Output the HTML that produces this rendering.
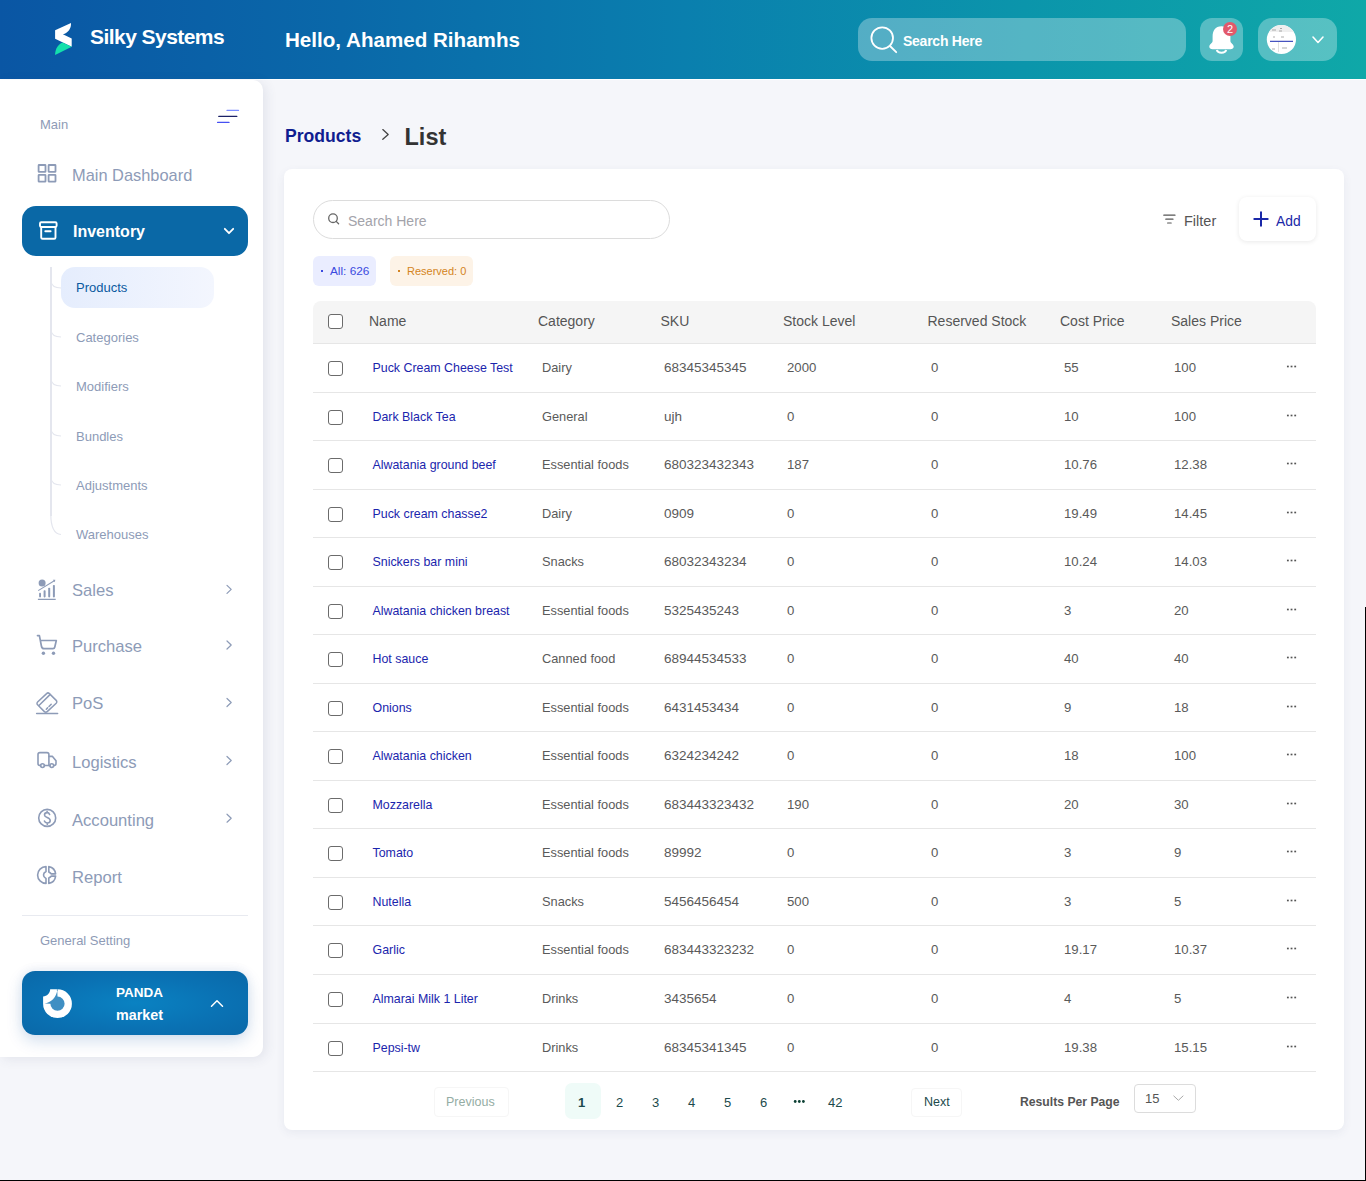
<!DOCTYPE html>
<html><head><meta charset="utf-8">
<style>
*{box-sizing:border-box;margin:0;padding:0}
html,body{width:1366px;height:1181px;overflow:hidden}
body{background:#f5f6fa;font-family:"Liberation Sans",sans-serif;position:relative;color:#555}
.abs{position:absolute}
.t{position:absolute;white-space:nowrap}
#hdr{position:absolute;left:0;top:0;width:1366px;height:79px;background:linear-gradient(90deg,#0a56a4 0%,#0a68a9 25%,#0a7fae 50%,#0b95ab 75%,#0fa8a8 100%)}
#hdrline{position:absolute;left:0;top:79px;width:1366px;height:1px;background:#fff}
.logo-t{left:90px;top:25px;font-size:21px;font-weight:bold;color:#fff;letter-spacing:-0.55px;line-height:24px}
.hello{left:285px;top:28px;font-size:20.6px;font-weight:bold;color:#fff;line-height:24px}
.hbox{position:absolute;top:18px;height:43px;background:rgba(255,255,255,0.3)}
#side{position:absolute;left:0;top:80px;width:263px;height:977px;background:#fff;border-radius:0 10px 10px 0;box-shadow:3px 2px 12px rgba(60,70,110,0.10)}
.sl{color:#8e9bb6}
.nav{left:72px;font-size:16.6px;color:#8d9bb7;line-height:18px}
.sub{left:76px;font-size:13px;color:#8d9bb7;line-height:15px}
#card{position:absolute;left:284px;top:169px;width:1060px;height:961px;background:#fff;border-radius:8px;box-shadow:0 3px 10px rgba(60,70,110,0.07)}
.th{position:absolute;left:313px;top:301px;width:1003px;height:42px;background:#f5f5f5;border-radius:8px 8px 0 0}
.hd{top:313px;font-size:14px;line-height:16px;color:#555}
.row{position:absolute;left:313px;width:1003px;border-top:1px solid #e6e6e6}
.row span{position:absolute;top:16px;font-size:13px;line-height:15px;white-space:nowrap;color:#5a5a5a}
.row .c1{left:59.5px;top:17px;color:#1b25ad;font-size:12.4px}
.row .c2{left:229px;font-size:12.8px}
.row .c3{left:351px;font-size:13.5px}
.row .c4{left:474px;font-size:13.2px}
.row .c5{left:618px;font-size:13.2px}
.row .c6{left:751px;font-size:13.2px}
.row .c7{left:861px;font-size:13.2px}
.cb{position:absolute;left:15px;top:17px;width:14.5px;height:14.5px;border:1.3px solid #6b6b6b;border-radius:3px;background:#fff}
.dots{position:absolute;left:973px;top:21px;width:11px;height:3px;background:radial-gradient(circle,#555 0.9px,transparent 1.2px) 0 0/3.7px 3px repeat-x}
.pg{top:1095px;font-size:13px;line-height:15px;color:#1c4a4c}
</style></head>
<body>
<div id="hdr"></div>
<div id="hdrline"></div>
<div class="t logo-t">Silky Systems</div>
<div class="t hello">Hello, Ahamed Rihamhs</div>
<div class="hbox" style="left:858px;width:328px;border-radius:14px"></div>
<div class="t" style="left:903px;top:33px;font-size:14px;letter-spacing:-0.25px;font-weight:bold;color:#fff;line-height:16px">Search Here</div>
<div class="hbox" style="left:1200px;width:43px;border-radius:12px"></div>
<div class="hbox" style="left:1258px;width:79px;border-radius:14px"></div>

<div id="side"></div>
<div class="t sl" style="left:40px;top:117px;font-size:13px;line-height:15px">Main</div>
<div class="t nav" style="top:166px;font-size:16.4px">Main Dashboard</div>
<div class="abs" style="left:22px;top:206px;width:226px;height:50px;border-radius:14px;background:#0a68a6"></div>
<div class="t nav" style="left:73px;top:223px;color:#fff;font-weight:bold;font-size:16px">Inventory</div>
<div class="abs" style="left:61px;top:267px;width:153px;height:41px;border-radius:14px;background:linear-gradient(90deg,#e5edfd,#f3f6fe)"></div>
<div class="abs" style="left:50px;top:267px;width:1.5px;height:249px;background:#e4e6ee"></div>
<div class="t sub" style="top:280px;color:#0b5aa0">Products</div>
<div class="t sub" style="top:330px">Categories</div>
<div class="t sub" style="top:379px">Modifiers</div>
<div class="t sub" style="top:429px">Bundles</div>
<div class="t sub" style="top:478px">Adjustments</div>
<div class="t sub" style="top:527px">Warehouses</div>
<div class="t nav" style="top:582px">Sales</div>
<div class="t nav" style="top:638px">Purchase</div>
<div class="t nav" style="top:695px">PoS</div>
<div class="t nav" style="top:754px">Logistics</div>
<div class="t nav" style="top:812px">Accounting</div>
<div class="t nav" style="top:869px">Report</div>
<div class="abs" style="left:22px;top:915px;width:226px;height:1.2px;background:#e8eaf0"></div>
<div class="t sl" style="left:40px;top:933px;font-size:13px;line-height:15px">General Setting</div>
<div class="abs" style="left:22px;top:971px;width:226px;height:64px;border-radius:13px;background:radial-gradient(ellipse at 50% 50%,#0a82c2 0%,#0a72b4 55%,#0a68a8 100%);box-shadow:0 6px 16px rgba(10,80,160,0.18),0 -2px 8px rgba(80,100,160,0.08)"></div>
<div class="t" style="left:116px;top:985px;font-size:13.5px;font-weight:bold;color:#fff;line-height:15px">PANDA</div>
<div class="t" style="left:116px;top:1008px;font-size:14.3px;font-weight:bold;color:#fff;line-height:15px">market</div>

<div id="card"></div>
<div class="t" style="left:285px;top:127px;font-size:17.6px;font-weight:bold;color:#101d90;line-height:18px">Products</div>
<div class="t" style="left:404.5px;top:124px;font-size:23.5px;font-weight:bold;color:#333;line-height:26px">List</div>
<div class="abs" style="left:313px;top:200px;width:357px;height:39px;border:1px solid #dcdcdc;border-radius:20px;background:#fff"></div>
<div class="t" style="left:348px;top:213px;font-size:14px;color:#a3a3aa;line-height:16px">Search Here</div>
<div class="abs" style="left:313px;top:256px;width:63px;height:30px;border-radius:6px;background:#eaedff"></div>
<div class="abs" style="left:320.5px;top:270px;width:2px;height:2px;background:#3b4ae0"></div>
<div class="t" style="left:330px;top:265px;font-size:11.8px;color:#3b4ae0;line-height:13px">All: 626</div>
<div class="abs" style="left:390px;top:256px;width:83px;height:30px;border-radius:6px;background:#fdf3e7"></div>
<div class="abs" style="left:397.5px;top:270px;width:2px;height:2px;background:#d48422"></div>
<div class="t" style="left:407px;top:265px;font-size:11px;color:#d48422;line-height:13px">Reserved: 0</div>
<div class="t" style="left:1184px;top:213px;font-size:14.5px;color:#555;line-height:16px">Filter</div>
<div class="abs" style="left:1239px;top:197px;width:77px;height:44px;border-radius:8px;background:#fff;box-shadow:0 1px 5px rgba(0,0,0,0.09)"></div>
<div class="t" style="left:1276px;top:214px;font-size:13.8px;color:#1a28a8;line-height:16px">Add</div>

<div class="th"></div>
<i class="cb" style="left:328px;top:314px"></i>
<div class="t hd" style="left:369px">Name</div>
<div class="t hd" style="left:538px">Category</div>
<div class="t hd" style="left:660.5px">SKU</div>
<div class="t hd" style="left:783px">Stock Level</div>
<div class="t hd" style="left:927.5px">Reserved Stock</div>
<div class="t hd" style="left:1060px">Cost Price</div>
<div class="t hd" style="left:1171px">Sales Price</div>
<div class="row" style="top:343px;height:49px"><i class="cb"></i><span class="c1">Puck Cream Cheese Test</span><span class="c2">Dairy</span><span class="c3">68345345345</span><span class="c4">2000</span><span class="c5">0</span><span class="c6">55</span><span class="c7">100</span><b class="dots"></b></div>
<div class="row" style="top:392px;height:48px"><i class="cb"></i><span class="c1">Dark Black Tea</span><span class="c2">General</span><span class="c3">ujh</span><span class="c4">0</span><span class="c5">0</span><span class="c6">10</span><span class="c7">100</span><b class="dots"></b></div>
<div class="row" style="top:440px;height:49px"><i class="cb"></i><span class="c1">Alwatania ground beef</span><span class="c2">Essential foods</span><span class="c3">680323432343</span><span class="c4">187</span><span class="c5">0</span><span class="c6">10.76</span><span class="c7">12.38</span><b class="dots"></b></div>
<div class="row" style="top:489px;height:48px"><i class="cb"></i><span class="c1">Puck cream chasse2</span><span class="c2">Dairy</span><span class="c3">0909</span><span class="c4">0</span><span class="c5">0</span><span class="c6">19.49</span><span class="c7">14.45</span><b class="dots"></b></div>
<div class="row" style="top:537px;height:49px"><i class="cb"></i><span class="c1">Snickers bar mini</span><span class="c2">Snacks</span><span class="c3">68032343234</span><span class="c4">0</span><span class="c5">0</span><span class="c6">10.24</span><span class="c7">14.03</span><b class="dots"></b></div>
<div class="row" style="top:586px;height:48px"><i class="cb"></i><span class="c1">Alwatania chicken breast</span><span class="c2">Essential foods</span><span class="c3">5325435243</span><span class="c4">0</span><span class="c5">0</span><span class="c6">3</span><span class="c7">20</span><b class="dots"></b></div>
<div class="row" style="top:634px;height:49px"><i class="cb"></i><span class="c1">Hot sauce</span><span class="c2">Canned food</span><span class="c3">68944534533</span><span class="c4">0</span><span class="c5">0</span><span class="c6">40</span><span class="c7">40</span><b class="dots"></b></div>
<div class="row" style="top:683px;height:48px"><i class="cb"></i><span class="c1">Onions</span><span class="c2">Essential foods</span><span class="c3">6431453434</span><span class="c4">0</span><span class="c5">0</span><span class="c6">9</span><span class="c7">18</span><b class="dots"></b></div>
<div class="row" style="top:731px;height:49px"><i class="cb"></i><span class="c1">Alwatania chicken</span><span class="c2">Essential foods</span><span class="c3">6324234242</span><span class="c4">0</span><span class="c5">0</span><span class="c6">18</span><span class="c7">100</span><b class="dots"></b></div>
<div class="row" style="top:780px;height:48px"><i class="cb"></i><span class="c1">Mozzarella</span><span class="c2">Essential foods</span><span class="c3">683443323432</span><span class="c4">190</span><span class="c5">0</span><span class="c6">20</span><span class="c7">30</span><b class="dots"></b></div>
<div class="row" style="top:828px;height:49px"><i class="cb"></i><span class="c1">Tomato</span><span class="c2">Essential foods</span><span class="c3">89992</span><span class="c4">0</span><span class="c5">0</span><span class="c6">3</span><span class="c7">9</span><b class="dots"></b></div>
<div class="row" style="top:877px;height:48px"><i class="cb"></i><span class="c1">Nutella</span><span class="c2">Snacks</span><span class="c3">5456456454</span><span class="c4">500</span><span class="c5">0</span><span class="c6">3</span><span class="c7">5</span><b class="dots"></b></div>
<div class="row" style="top:925px;height:49px"><i class="cb"></i><span class="c1">Garlic</span><span class="c2">Essential foods</span><span class="c3">683443323232</span><span class="c4">0</span><span class="c5">0</span><span class="c6">19.17</span><span class="c7">10.37</span><b class="dots"></b></div>
<div class="row" style="top:974px;height:49px"><i class="cb"></i><span class="c1">Almarai Milk 1 Liter</span><span class="c2">Drinks</span><span class="c3">3435654</span><span class="c4">0</span><span class="c5">0</span><span class="c6">4</span><span class="c7">5</span><b class="dots"></b></div>
<div class="row" style="top:1023px;height:48px"><i class="cb"></i><span class="c1">Pepsi-tw</span><span class="c2">Drinks</span><span class="c3">68345341345</span><span class="c4">0</span><span class="c5">0</span><span class="c6">19.38</span><span class="c7">15.15</span><b class="dots"></b></div>
<div class="abs" style="left:313px;top:1071px;width:1003px;height:1px;background:#e6e6e6"></div>
<div class="abs" style="left:434px;top:1087px;width:75px;height:30px;border:1px solid #f6f6f6;border-radius:4px;background:#fff"></div>
<div class="t pg" style="left:446px;color:#94aca3;font-size:12.5px">Previous</div>
<div class="abs" style="left:565px;top:1083px;width:36px;height:36px;border-radius:7px;background:#effbf8"></div>
<div class="t pg" style="left:578px;font-weight:bold">1</div>
<div class="t pg" style="left:616px">2</div>
<div class="t pg" style="left:652px">3</div>
<div class="t pg" style="left:688px">4</div>
<div class="t pg" style="left:724px">5</div>
<div class="t pg" style="left:760px">6</div>

<div class="t pg" style="left:828px">42</div>
<div class="abs" style="left:911px;top:1088px;width:51px;height:29px;border:1px solid #f6f6f6;border-radius:4px;background:#fff"></div>
<div class="t pg" style="left:924px;font-size:12.5px">Next</div>
<div class="t pg" style="left:1020px;font-weight:bold;font-size:12.2px;color:#555">Results Per Page</div>
<div class="abs" style="left:1134px;top:1084px;width:62px;height:29px;border:1px solid #dcdcdc;border-radius:4px;background:#fff"></div>
<div class="t" style="left:1145px;top:1091px;font-size:13px;line-height:15px;color:#555">15</div>
<svg class="abs" style="left:0;top:0" width="1366" height="1181" viewBox="0 0 1366 1181">
<!-- logo -->
<path d="M55.1,30.2 L71,22.9 C71.3,28.5 68.2,32.6 62.9,34.3 L71.7,38.5 L71.7,46.8 L55.1,38.8 Z" fill="#fff"/>
<path d="M62.5,42.6 L71.7,46.8 L55.1,54.9 C55.1,49 58,44.5 62.5,42.6 Z" fill="#14e0ac"/>
<!-- header search icon -->
<circle cx="882.2" cy="38.1" r="10.8" fill="none" stroke="#fff" stroke-width="1.8"/>
<path d="M890,46 L896.2,52.2" stroke="#fff" stroke-width="1.8" stroke-linecap="round"/>
<!-- bell -->
<path d="M1221.5,26.2 C1215.2,26.2 1212.6,31 1212.6,36.5 L1212.6,41 C1212.6,43.2 1209.3,44.2 1209.3,46.6 C1209.3,48.4 1210.6,49.2 1212.6,49.2 L1230.4,49.2 C1232.4,49.2 1233.7,48.4 1233.7,46.6 C1233.7,44.2 1230.4,43.2 1230.4,41 L1230.4,36.5 C1230.4,31 1227.8,26.2 1221.5,26.2 Z" fill="#fff"/>
<path d="M1216.8,50 C1217.8,53.6 1225.2,53.6 1226.2,50" fill="none" stroke="#fff" stroke-width="2"/>
<circle cx="1230" cy="29" r="7" fill="#e2596b"/>
<text x="1230" y="33.2" font-family="Liberation Sans" font-size="11" fill="#fff" text-anchor="middle">2</text>
<!-- avatar -->
<defs><clipPath id="avc"><circle cx="1281.4" cy="39.5" r="14.6"/></clipPath></defs>
<circle cx="1281.4" cy="39.5" r="14.6" fill="#fff"/>
<g clip-path="url(#avc)">
<rect x="1266" y="24" width="31" height="8" fill="#efefef"/>
<rect x="1270" y="40.8" width="23" height="1" fill="#1a2ab0"/>
<path d="M1272,30 h4 M1280,28.5 h2 M1279,31 h3 M1273,37 h2 M1281,37 h3 M1272,49 h3 M1282,48 h5" stroke="#777" stroke-width="0.6"/>
<path d="M1278.5,42 v10" stroke="#ccc" stroke-width="0.6"/>
</g>
<path d="M1313,37 L1318,42.5 L1323,37" fill="none" stroke="#fff" stroke-width="1.6" stroke-linecap="round" stroke-linejoin="round"/>
<!-- hamburger -->
<path d="M227,110.4 H238.5" stroke="#7b8cff" stroke-width="1.2" stroke-linecap="round"/>
<path d="M218.8,116.4 H236.8" stroke="#1b2166" stroke-width="1.3" stroke-linecap="round"/>
<path d="M217.6,122.4 H229" stroke="#4650f2" stroke-width="1.3" stroke-linecap="round"/>
<!-- grid icon -->
<g fill="none" stroke="#8d9bb7" stroke-width="1.8">
<rect x="38.6" y="165" width="6.9" height="6.9" rx="0.5"/>
<rect x="48.6" y="165" width="6.9" height="6.9" rx="0.5"/>
<rect x="38.6" y="174.8" width="6.9" height="6.9" rx="0.5"/>
<rect x="48.6" y="174.8" width="6.9" height="6.9" rx="0.5"/>
</g>
<!-- inventory icon -->
<g fill="none" stroke="#fff" stroke-width="1.9" stroke-linejoin="round">
<rect x="40" y="222.2" width="16.6" height="4.8" rx="1.2"/>
<path d="M41.2,227 V237.5 C41.2,238.3 41.8,238.8 42.5,238.8 H54.2 C55,238.8 55.5,238.3 55.5,237.5 V227"/>
<path d="M45.3,231.3 H50.6" stroke-linecap="round"/>
</g>
<path d="M224.8,228.8 L229,233.2 L233.2,228.8" fill="none" stroke="#fff" stroke-width="1.8" stroke-linecap="round" stroke-linejoin="round"/>
<!-- sub nav curves -->
<g fill="none" stroke="#e4e6ee" stroke-width="1.2">
<path d="M50.8,281 C51.5,286 55,288 61,288"/>
<path d="M50.8,330 C51.5,335 55,337 61,337"/>
<path d="M50.8,379 C51.5,384 55,386 61,386"/>
<path d="M50.8,429 C51.5,434 55,436 61,436"/>
<path d="M50.8,478 C51.5,483 55,485 61,485"/>
<path d="M50.8,514 C50.8,528 54,534 61,534.5"/>
</g>
<!-- sales icon -->
<g fill="#8d9bb7">
<circle cx="42.1" cy="582.9" r="3.5"/>
<rect x="39.1" y="592.8" width="1.9" height="4.6" rx="0.8"/>
<rect x="43.6" y="590.2" width="2" height="7.2" rx="0.8"/>
<rect x="48.2" y="587.7" width="2" height="9.7" rx="0.8"/>
<rect x="52.9" y="585" width="2" height="12.4" rx="0.8"/>
<path d="M52.8,579.8 L55.3,579.8 L54.8,582.3 Z"/>
</g>
<path d="M38.2,590.6 L54.3,580.7 M37.9,599.4 H55.7" stroke="#8d9bb7" stroke-width="1.1"/>
<!-- cart -->
<g fill="none" stroke="#8d9bb7" stroke-width="1.7" stroke-linecap="round" stroke-linejoin="round">
<path d="M37.5,635.6 H39.4 L41.4,646 C41.7,647.8 42.5,648.7 44,648.7 H53 C54,648.7 54.6,648 54.8,647 L56.3,640.5 H40.8"/>
</g>
<circle cx="43.4" cy="653.2" r="1.7" fill="#8d9bb7"/>
<circle cx="53.5" cy="653.2" r="1.7" fill="#8d9bb7"/>
<!-- pos -->
<g fill="none" stroke="#8d9bb7" stroke-width="1.5" stroke-linecap="round" stroke-linejoin="round">
<path d="M46.6,693.6 C47.4,692.8 48.6,692.8 49.4,693.6 L56.2,700.4 C57,701.2 57,702.4 56.2,703.2 L47.2,711.6 C46.4,712.4 45.2,712.4 44.4,711.6 L37.6,704.8 C36.8,704 36.8,702.8 37.6,702 Z"/>
<path d="M39.2,705.2 L50,694.6"/>
<path d="M46.3,709.2 L47.6,707.9 M49,706.5 L51.2,704.3"/>
<path d="M36.6,713.4 H57.6"/>
</g>
<!-- truck -->
<g fill="none" stroke="#8d9bb7" stroke-width="1.6" stroke-linecap="round" stroke-linejoin="round">
<path d="M40.6,765.5 H39.8 C38.6,765.5 38,764.8 38,763.6 V754.5 C38,753.3 38.7,752.6 39.9,752.6 H47 C48.2,752.6 48.9,753.3 48.9,754.5 V765.5 H49.6"/>
<path d="M48.9,756.4 H52.5 L56,760.8 V763.6 C56,764.8 55.3,765.5 54.2,765.5 H53.9"/>
<path d="M44.4,765.5 H49.8"/>
<circle cx="42.5" cy="765.6" r="1.9"/>
<circle cx="51.8" cy="765.6" r="1.9"/>
</g>
<!-- accounting -->
<g fill="none" stroke="#8d9bb7" stroke-width="1.6" stroke-linecap="round">
<circle cx="47.2" cy="817.9" r="8.5"/>
<path d="M49.6,814.5 C49.2,813.3 48.3,812.6 47.1,812.6 C45.6,812.6 44.5,813.6 44.5,814.9 C44.5,818 50.2,817 50.2,820.6 C50.2,822 49,823 47.3,823 C45.9,823 44.8,822.3 44.4,821.1 M47.3,823 V824.5 M47.1,811.3 V812.6"/>
</g>
<!-- report -->
<g fill="none" stroke="#8d9bb7" stroke-width="1.6" stroke-linejoin="round">
<path d="M46,866.6 A8.4,8.4 0 0 0 46,883.4 V878.5 C44.2,877.6 43.5,876.3 43.5,875 C43.5,873.7 44.2,872.4 46,871.5 Z"/>
<path d="M48.8,866.6 A8.4,8.4 0 0 1 55.6,873.9 H51.3 C50.5,873.1 49.6,872.4 48.8,872 Z"/>
<path d="M48.8,883.4 A8.4,8.4 0 0 0 55.6,876.1 H51.3 C50.5,876.9 49.6,877.6 48.8,878 Z"/>
</g>
<!-- nav chevrons -->
<g fill="none" stroke="#8d9bb7" stroke-width="1.2" stroke-linecap="round" stroke-linejoin="round">
<path d="M227,585.4 L231.2,589.4 L227,593.4"/>
<path d="M227,641 L231.2,645 L227,649"/>
<path d="M227,698.5 L231.2,702.5 L227,706.5"/>
<path d="M227,756.5 L231.2,760.5 L227,764.5"/>
<path d="M227,814.2 L231.2,818.2 L227,822.2"/>
</g>
<!-- panda logo -->
<path d="M50.2,989.3 H57.5 A14.4,14.4 0 1 1 43.1,1003.7 V996.5 C47,996.3 50,993.5 50.2,989.3 Z" fill="#fff"/>
<path d="M57.3,990 L57.5,996.6 A7.1,7.1 0 1 1 50.4,1003.7 L44.5,1003.4 C51,1003 56.5,997 57.3,990 Z" fill="#3f8fc3"/>
<path d="M57.4,989 V991" stroke="#3f8fc3" stroke-width="0.7"/>
<path d="M211.5,1006.3 L217,1000.8 L222.5,1006.3" fill="none" stroke="#fff" stroke-width="1.5" stroke-linecap="round" stroke-linejoin="round"/>
<!-- breadcrumb chevron -->
<path d="M382.8,129.6 L388.2,134.4 L382.8,139.2" fill="none" stroke="#444" stroke-width="1.3" stroke-linecap="round" stroke-linejoin="round"/>
<!-- card search icon -->
<circle cx="333" cy="218.2" r="4.3" fill="none" stroke="#666" stroke-width="1.3"/>
<path d="M336.2,221.4 L338.6,223.8" stroke="#666" stroke-width="1.3" stroke-linecap="round"/>
<!-- filter icon -->
<path d="M1163.8,215.2 H1175 M1165.8,219.2 H1173 M1167.6,223 H1171.2" stroke="#555" stroke-width="1.2" stroke-linecap="round"/>
<!-- add plus -->
<path d="M1261,212.3 V225.7 M1254.3,219 H1267.7" stroke="#1a28a8" stroke-width="2" stroke-linecap="round"/>
<!-- page dots -->
<g fill="#0c4034"><circle cx="795.2" cy="1101.5" r="1.4"/><circle cx="799.3" cy="1101.5" r="1.4"/><circle cx="803.4" cy="1101.5" r="1.4"/></g>
<!-- select chevron -->
<path d="M1173.8,1096 L1178.4,1100.3 L1183,1096" fill="none" stroke="#aaa" stroke-width="1" stroke-linecap="round"/>
</svg>

<div class="abs" style="left:1365px;top:607px;width:1.3px;height:574px;background:#000"></div>
<div class="abs" style="left:0;top:1180px;width:1366px;height:1.3px;background:#000"></div>
</body></html>
